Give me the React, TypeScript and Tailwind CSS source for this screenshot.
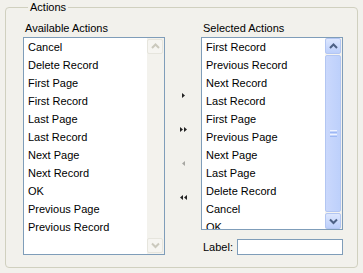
const available = [
  'Cancel',
  'Delete Record',
  'First Page',
  'First Record',
  'Last Page',
  'Last Record',
  'Next Page',
  'Next Record',
  'OK',
  'Previous Page',
  'Previous Record',
]

const selected = [
  'First Record',
  'Previous Record',
  'Next Record',
  'Last Record',
  'First Page',
  'Previous Page',
  'Next Page',
  'Last Page',
  'Delete Record',
  'Cancel',
  'OK',
]

function Chevron({ dir, color }: { dir: 'up' | 'down'; color: string }) {
  const points = dir === 'up' ? '1,5 4.5,1.5 8,5' : '1,1.5 4.5,5 8,1.5'
  return (
    <svg width="9" height="7" viewBox="0 0 9 7">
      <polyline points={points} fill="none" stroke={color} strokeWidth="2" />
    </svg>
  )
}

function Arrow({ dir, double, disabled }: { dir: 'right' | 'left'; double?: boolean; disabled?: boolean }) {
  const color = disabled ? '#a7a7a2' : '#222'
  const tri = (x: number) =>
    dir === 'right' ? `${x},0 ${x + 3},2.5 ${x},5` : `${x + 3},0 ${x},2.5 ${x + 3},5`
  return (
    <svg width={double ? 8 : 4} height="5" viewBox={double ? '0 0 8 5' : '0 0 4 5'}>
      <polygon points={tri(0)} fill={color} />
      {double && <polygon points={tri(4)} fill={color} />}
    </svg>
  )
}

function DisabledScrollbar() {
  return (
    <div className="w-[17px] h-full flex flex-col justify-between bg-[#f3f2ed] py-[1px] pr-[1px]">
      <div className="h-[15px] w-[16px] border border-[#e6e5dd] bg-[#f6f5f1] rounded-[2px] flex items-center justify-center">
        <Chevron dir="up" color="#cbc9bd" />
      </div>
      <div className="h-[15px] w-[16px] border border-[#e6e5dd] bg-[#f6f5f1] rounded-[2px] flex items-center justify-center">
        <Chevron dir="down" color="#cbc9bd" />
      </div>
    </div>
  )
}

function BlueScrollbar() {
  return (
    <div className="w-[17px] h-full flex flex-col gap-[1px] bg-[#f4f3ef] pr-[1px]">
      <div className="h-[16px] w-[16px] shrink-0 border border-[#b3c6f2] bg-gradient-to-b from-[#dde7fe] to-[#bccffb] rounded-[2px] flex items-center justify-center">
        <Chevron dir="up" color="#4d6185" />
      </div>
      <div className="flex-1 w-[16px] border border-[#b3c6f2] bg-gradient-to-r from-[#cad8fc] to-[#bdd0fb] rounded-[2px] flex items-center justify-center">
        <div className="flex flex-col gap-[1px]">
          <div className="w-[7px] h-[1px] bg-[#eef3fe]" />
          <div className="w-[7px] h-[1px] bg-[#9db8f4]" />
          <div className="w-[7px] h-[1px] bg-[#eef3fe]" />
          <div className="w-[7px] h-[1px] bg-[#9db8f4]" />
        </div>
      </div>
      <div className="h-[16px] w-[16px] shrink-0 border border-[#b3c6f2] bg-gradient-to-b from-[#dde7fe] to-[#bccffb] rounded-[2px] flex items-center justify-center">
        <Chevron dir="down" color="#4d6185" />
      </div>
    </div>
  )
}

function ListBox({ items, height, blue }: { items: string[]; height: string; blue?: boolean }) {
  return (
    <div className={`w-[142px] ${height} border border-[#7f9db9] bg-white flex`}>
      <div className="flex-1 overflow-hidden">
        {items.map((item) => (
          <div key={item} className="h-[18px] leading-[18px] pl-[4px] text-black whitespace-nowrap">
            {item}
          </div>
        ))}
      </div>
      {blue ? <BlueScrollbar /> : <DisabledScrollbar />}
    </div>
  )
}

export default function App() {
  return (
    <div className="w-[363px] h-[273px] bg-[#f2f1ec] px-[5px] text-[11px] font-['Liberation_Sans',Arial,sans-serif] text-black">
      <fieldset className="h-[268px] border border-[#d0d0bf] rounded-[4px] pl-[17px] pt-[8px]">
        <legend className="ml-[5px] px-[2px] leading-[14px]">Actions</legend>
        <div className="flex">
          <div className="flex flex-col">
            <div className="h-[15px] leading-[13px] pl-[2px]">Available Actions</div>
            <ListBox items={available} height="h-[218px]" />
          </div>
          <div className="w-[36px] flex flex-col items-center pt-[71px] gap-[29px] pl-[2px]">
            <button className="h-[5px] flex items-center"><Arrow dir="right" /></button>
            <button className="h-[5px] flex items-center"><Arrow dir="right" double /></button>
            <button className="h-[5px] flex items-center"><Arrow dir="left" disabled /></button>
            <button className="h-[5px] flex items-center"><Arrow dir="left" double /></button>
          </div>
          <div className="flex flex-col">
            <div className="h-[15px] leading-[13px] pl-[2px]">Selected Actions</div>
            <ListBox items={selected} height="h-[193px]" blue />
            <div className="flex items-center mt-[9px] pl-[2px]">
              <span className="w-[34px]">Label:</span>
              <input className="w-[106px] h-[16px] border border-[#7f9db9] bg-white outline-none" />
            </div>
          </div>
        </div>
      </fieldset>
    </div>
  )
}
